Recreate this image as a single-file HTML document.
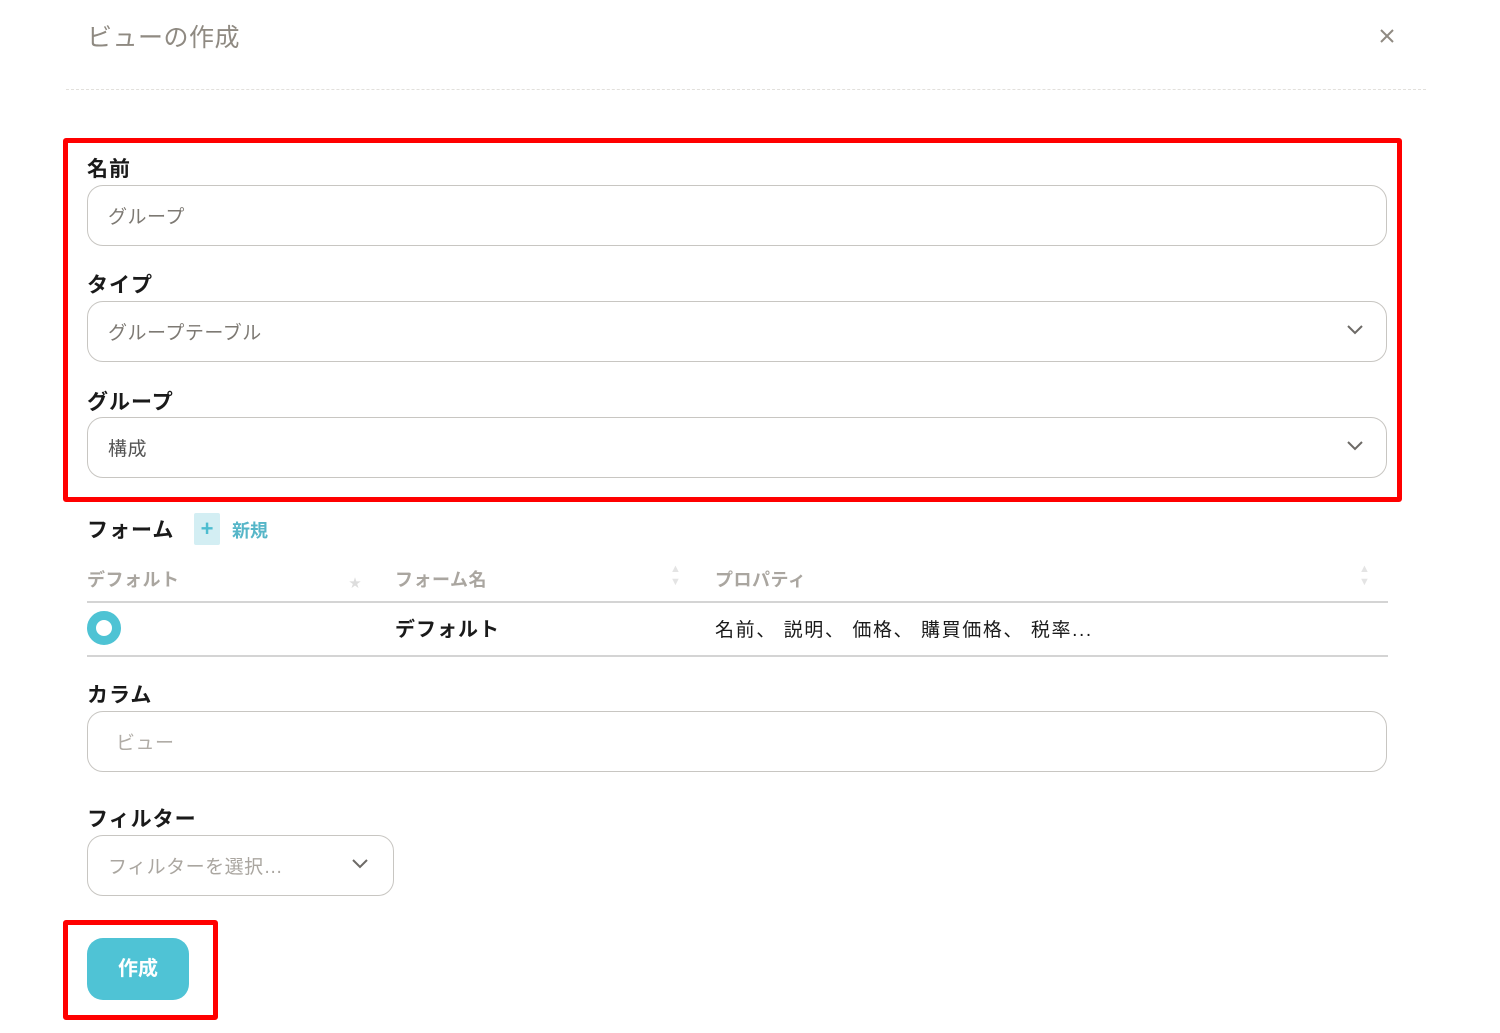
<!DOCTYPE html>
<html><head><meta charset="utf-8"><style>
*{margin:0;padding:0;box-sizing:border-box}
body{width:1500px;height:1033px;background:#fff;position:relative;overflow:hidden;font-family:"Liberation Sans","Noto Sans CJK JP",sans-serif;color:#1a1a1a}
.a{position:absolute}
.lbl{position:absolute;left:87px;font-size:21px;font-weight:bold;line-height:24px;color:#1a1a1a;letter-spacing:1px}
.inp{position:absolute;left:87px;width:1300px;height:61px;border:1.5px solid #c8c6c2;border-radius:16px}
.ph{position:absolute;left:20px;top:20px;font-size:19px;color:#7d7973;line-height:24px;letter-spacing:0.5px}
.chev{position:absolute;right:22px;top:22px}
.red{position:absolute;border:5px solid #f00;border-radius:3px}
</style></head><body>
<div class="a" style="left:87px;top:23px;font-size:25px;color:#8f8a82;line-height:30px;letter-spacing:0.5px">ビューの作成</div>
<svg class="a" style="left:1379px;top:28px" width="16" height="16"><path d="M2 2L14 14M14 2L2 14" stroke="#8f8a82" stroke-width="2"/></svg>
<div class="a" style="left:66px;top:89px;width:1360px;border-top:1px dashed #e2e0dc"></div>

<div class="red" style="left:63px;top:138px;width:1339px;height:364px"></div>

<div class="lbl" style="top:158px">名前</div>
<div class="inp" style="top:185px"><span class="ph">グループ</span></div>

<div class="lbl" style="top:274px">タイプ</div>
<div class="inp" style="top:301px"><span class="ph">グループテーブル</span><svg class="chev" width="18" height="12"><path d="M2 2L9 9L16 2" stroke="#6d6a66" stroke-width="2" fill="none"/></svg></div>

<div class="lbl" style="top:391px">グループ</div>
<div class="inp" style="top:417px"><span class="ph" style="color:#555">構成</span><svg class="chev" width="18" height="12"><path d="M2 2L9 9L16 2" stroke="#6d6a66" stroke-width="2" fill="none"/></svg></div>

<div class="lbl" style="top:519px">フォーム</div>
<div class="a" style="left:194px;top:513px;width:26px;height:32px;background:#d3eef3;border-radius:2px;color:#4dbdd0;font-size:22px;font-weight:bold;text-align:center;line-height:32px">+</div>
<div class="a" style="left:232px;top:519px;font-size:18px;color:#56b6c8;font-weight:bold;line-height:24px">新規</div>

<div class="a" style="left:87px;top:568px;font-size:18px;color:#aaa6a0;font-weight:bold;line-height:24px;letter-spacing:0.5px">デフォルト</div>
<div class="a" style="left:349px;top:574px;font-size:12px;color:#ddd">★</div>
<div class="a" style="left:395px;top:568px;font-size:18px;color:#aaa6a0;font-weight:bold;line-height:24px;letter-spacing:0.5px">フォーム名</div>
<div class="a" style="left:670px;top:563px;font-size:11px;color:#e4e4e4;line-height:13px">▲<br>▼</div>
<div class="a" style="left:715px;top:568px;font-size:18px;color:#aaa6a0;font-weight:bold;line-height:24px;letter-spacing:0.5px">プロパティ</div>
<div class="a" style="left:1359px;top:563px;font-size:11px;color:#e4e4e4;line-height:13px">▲<br>▼</div>
<div class="a" style="left:87px;top:601px;width:1301px;border-top:2px solid #d4d4d4"></div>

<div class="a" style="left:87px;top:611px;width:34px;height:34px;border-radius:50%;border:9px solid #4ec3d4"></div>
<div class="a" style="left:395px;top:617px;font-size:20px;font-weight:bold;line-height:26px;letter-spacing:1px">デフォルト</div>
<div class="a" style="left:715px;top:618px;font-size:19px;line-height:26px;letter-spacing:1.6px">名前、 説明、 価格、 購買価格、 税率...</div>
<div class="a" style="left:87px;top:655px;width:1301px;border-top:2px solid #d4d4d4"></div>

<div class="lbl" style="top:684px">カラム</div>
<div class="inp" style="top:711px"><span class="ph" style="left:28px;color:#b0aca6">ビュー</span></div>

<div class="lbl" style="top:808px">フィルター</div>
<div class="inp" style="top:835px;width:307px"><span class="ph" style="color:#aaa6a0">フィルターを選択…</span><svg class="chev" width="18" height="12" style="right:24px"><path d="M2 2L9 9L16 2" stroke="#6d6a66" stroke-width="2" fill="none"/></svg></div>

<div class="red" style="left:63px;top:920px;width:155px;height:100px"></div>
<div class="a" style="left:87px;top:938px;width:102px;height:62px;background:#4fc3d5;border-radius:16px;color:#fff;font-size:20px;font-weight:bold;text-align:center;line-height:62px">作成</div>
</body></html>
